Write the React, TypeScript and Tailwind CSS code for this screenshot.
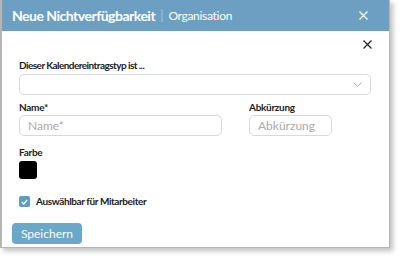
import React from "react";

const label = "text-[10px] font-bold text-[#222] leading-[13px] h-[13px] tracking-[-0.3px]";

export default function App() {
  return (
    <div className="w-[400px] h-[258px] bg-white" style={{ fontFamily: 'Lato, "Noto Sans", sans-serif' }}>
      <div className="w-[390px] h-[248px] border-l-2 border-r border-b border-[#b5b5b5] shadow-[3px_3px_5px_rgba(0,0,0,0.25)] bg-white flex flex-col">
        <div className="h-[31px] shrink-0 bg-[#6d9fc2] flex items-center pl-[10px] pr-[21px] text-white">
          <span className="text-[14px] font-bold tracking-[-0.5px]">Neue Nichtverfügbarkeit</span>
          <span className="mx-[5px] text-[#a9c6da] text-[13px]">|</span>
          <span className="text-[12px] tracking-[-0.3px]">Organisation</span>
          <span className="ml-auto flex">
            <svg width="9" height="9" viewBox="0 0 9 9" stroke="white" strokeWidth="1.2"><path d="M0.5 0.5L8.5 8.5M8.5 0.5L0.5 8.5" /></svg>
          </span>
        </div>
        <div className="flex justify-end pr-[17px] pt-[9px]">
          <svg width="9" height="9" viewBox="0 0 9 9" stroke="#222" strokeWidth="1.2"><path d="M0.5 0.5L8.5 8.5M8.5 0.5L0.5 8.5" /></svg>
        </div>
        <div className="px-[17px] flex flex-col">
          <div className="text-[10px] font-bold text-[#222] leading-[13px] h-[13px] tracking-[-0.55px] mt-[10px]">Dieser Kalendereintragstyp ist ...</div>
          <div className="mt-[2px] h-[21px] w-[352px] border border-[#d9d9d9] rounded-[5px] flex items-center justify-end pr-[8px]">
            <svg width="9" height="5" viewBox="0 0 9 5" stroke="#b0b0b0" strokeWidth="1" fill="none"><path d="M0.5 0.5L4.5 4.5L8.5 0.5" /></svg>
          </div>
          <div className="flex mt-[6px]">
            <div className="flex flex-col w-[230px]">
              <div className={label}>Name*</div>
              <div className="mt-[1px] h-[21px] w-[203px] border border-[#d9d9d9] rounded-[5px] flex items-center pl-[8px] text-[12px] text-[#aaa]">Name*</div>
            </div>
            <div className="flex flex-col">
              <div className={label}>Abkürzung</div>
              <div className="mt-[1px] h-[21px] w-[83px] border border-[#d9d9d9] rounded-[5px] flex items-center pl-[8px] text-[12px] text-[#aaa]">Abkürzung</div>
            </div>
          </div>
          <div className={label + " mt-[10px]"}>Farbe</div>
          <div className="mt-[2px] w-[18px] h-[18px] bg-black rounded-[3px]"></div>
          <div className="flex items-center mt-[16px] gap-[6px] h-[13px]">
            <div className="w-[11px] h-[11px] rounded-[2px] bg-[#5e9cc4] flex items-center justify-center">
              <svg width="7" height="6" viewBox="0 0 7 6" stroke="white" strokeWidth="1.4" fill="none"><path d="M0.8 3L2.8 5L6.2 1" /></svg>
            </div>
            <span className="text-[10px] font-bold text-[#222] leading-[13px] tracking-[-0.4px]">Auswählbar für Mitarbeiter</span>
          </div>
        </div>
        <div className="pl-[10px] mt-[12px]">
          <button className="h-[21px] w-[70px] rounded-[4px] bg-[#6aa8c9] text-white text-[12px] leading-[21px]">Speichern</button>
        </div>
      </div>
    </div>
  );
}
